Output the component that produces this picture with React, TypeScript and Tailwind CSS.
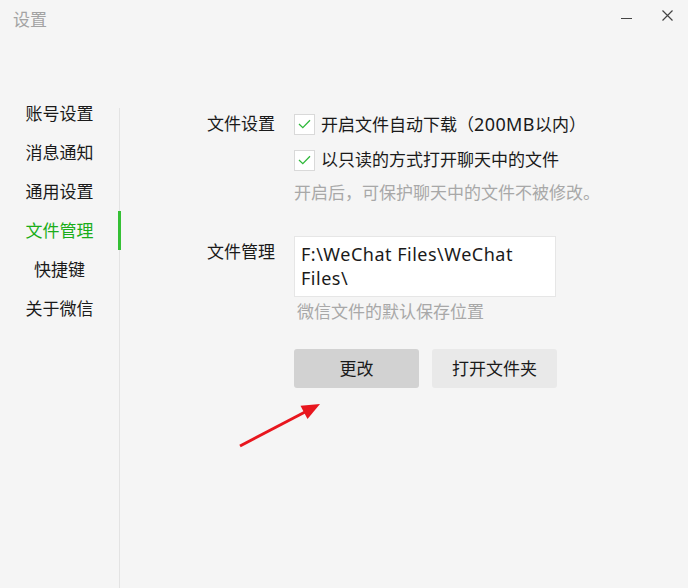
const font = { fontFamily: '"Noto Sans", "Noto Sans CJK SC", sans-serif' };

const navItems = ["账号设置", "消息通知", "通用设置", "文件管理", "快捷键", "关于微信"];

function CheckBox() {
  return (
    <span className="flex h-[21px] w-[21px] shrink-0 items-center justify-center border border-[#d9d9d9] bg-white">
      <svg width="13" height="10" viewBox="0 0 13 10" fill="none">
        <path d="M1 5l3.8 3.6L12 1.2" stroke="#2fb83a" strokeWidth="1.3" />
      </svg>
    </span>
  );
}

function CheckRow({ children }: { children: React.ReactNode }) {
  return (
    <div className="flex h-[36px] items-center gap-[6px]">
      <CheckBox />
      <span className="text-[17px] leading-[24px] text-[#1a1a1a]">{children}</span>
    </div>
  );
}

export default function App() {
  const active = "文件管理";

  return (
    <div className="relative h-[588px] w-[688px] overflow-hidden bg-[#f5f5f5] select-none" style={font}>
      {/* title bar */}
      <div className="flex h-[94px] items-start justify-between">
        <div className="pl-[13px] pt-[8px] text-[17px] leading-[24px] text-[#a3a3a3]">设置</div>
        <div className="flex items-center gap-[30px] pr-[15px] pt-[10px]">
          <span className="mt-[5px] block h-px w-[11px] bg-[#444]" />
          <svg width="11" height="11" viewBox="0 0 11 11">
            <path d="M0.5 0.5l10 10M10.5 0.5l-10 10" stroke="#444" strokeWidth="1.2" />
          </svg>
        </div>
      </div>

      <div className="flex h-[494px]">
        {/* sidebar */}
        <nav className="flex w-[119px] flex-col">
          {navItems.map((item) => (
            <div
              key={item}
              className={
                "relative flex h-[39px] items-center justify-center text-[17px] leading-[24px] " +
                (item === active ? "text-[#1aad19]" : "text-[#1a1a1a]")
              }
            >
              {item}
              {item === active ? (
                <span className="absolute right-[-2px] top-0 h-full w-[3px] bg-[#35c035]" />
              ) : null}
            </div>
          ))}
        </nav>
        <div className="mt-[14px] w-px bg-[#e3e3e3]" />

        {/* content */}
        <div className="flex-1 pl-[87px] pt-[12px]">
          <div className="grid grid-cols-[87px_1fr]">
            <div className="flex h-[36px] items-center text-[17px] leading-[24px] text-[#1a1a1a]">文件设置</div>
            <div className="flex flex-col">
              <CheckRow>
                开启文件自动下载（<span className="text-[18px] tracking-[0.4px]">200MB</span>以内）
              </CheckRow>
              <CheckRow>以只读的方式打开聊天中的文件</CheckRow>
              <div className="flex h-[30px] items-center text-[17px] leading-[24px] text-[#a8a8a8]">
                开启后，可保护聊天中的文件不被修改。
              </div>
            </div>

            <div className="mt-[32px] text-[17px] leading-[24px] text-[#1a1a1a]">文件管理</div>
            <div className="mt-[28px] flex flex-col">
              <div className="h-[61px] w-[262px] border border-[#e6e6e6] bg-white px-[6px] py-[5px] text-[18px] leading-[24px] tracking-[0.5px] text-[#1a1a1a]">
                F:\WeChat Files\WeChat Files\
              </div>
              <div className="flex h-[30px] items-center pl-[3px] text-[17px] leading-[24px] text-[#a8a8a8]">
                微信文件的默认保存位置
              </div>
              <div className="mt-[22px] flex gap-[13px]">
                <button className="h-[39px] w-[125px] rounded-[3px] bg-[#d2d2d2] text-[17px] text-[#1a1a1a]">更改</button>
                <button className="h-[39px] w-[125px] rounded-[3px] bg-[#e9e9e9] text-[17px] text-[#1a1a1a]">打开文件夹</button>
              </div>
            </div>
          </div>
        </div>
      </div>

      {/* annotation arrow */}
      <svg className="pointer-events-none absolute left-0 top-0" width="688" height="588">
        <line x1="240" y1="446" x2="306" y2="411.5" stroke="#e8161e" strokeWidth="3" />
        <polygon points="320,404 300.5,405.8 307.5,419" fill="#e8161e" />
      </svg>
    </div>
  );
}
